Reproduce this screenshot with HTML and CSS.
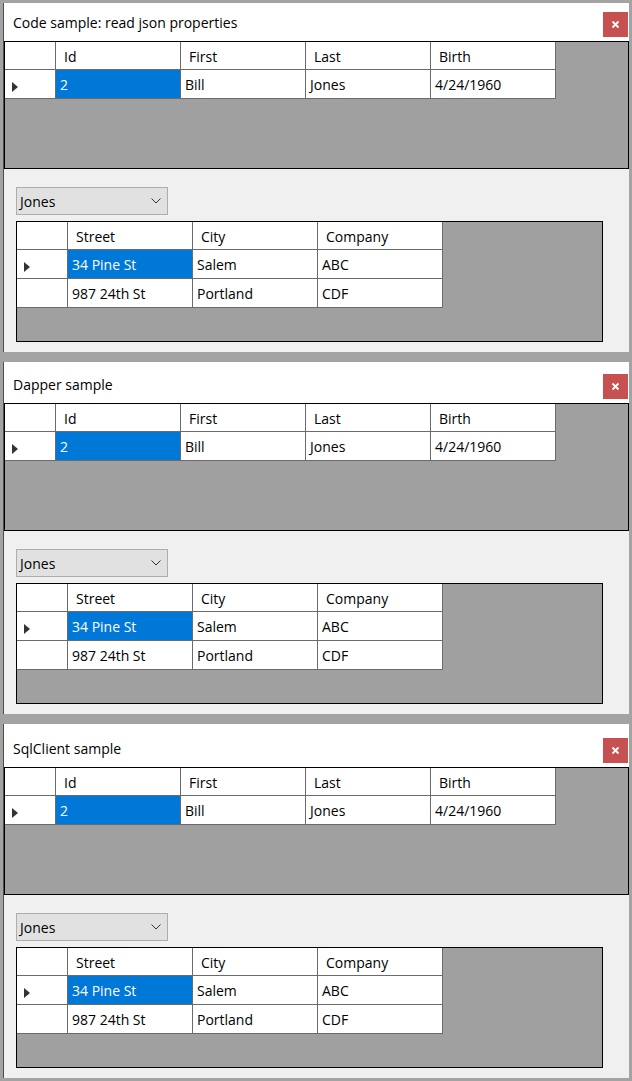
FILE: index.html
```html
<!DOCTYPE html>
<html lang="en">
<head>
<meta charset="utf-8">
<title>Samples</title>
<link rel="stylesheet" href="styles.css">
</head>
<body>
<div class="screen">

  <section class="win win-1">
    <header class="titlebar">
      <span class="title">Code sample: read json properties</span>
      <span class="close"><svg width="9" height="9" viewBox="0 0 9 9"><path d="M1.5 1.5L7.5 7.5M7.5 1.5L1.5 7.5" stroke="#fff" stroke-width="1.8"/></svg></span>
    </header>
    <div class="grid master">
      <div class="table cols-4">
        <div class="cell hdr rowhdr"></div>
        <div class="cell hdr">Id</div>
        <div class="cell hdr">First</div>
        <div class="cell hdr">Last</div>
        <div class="cell hdr">Birth</div>
        <div class="cell rowhdr"><span class="arrow"></span></div>
        <div class="cell sel">2</div>
        <div class="cell">Bill</div>
        <div class="cell">Jones</div>
        <div class="cell">4/24/1960</div>
      </div>
    </div>
    <div class="panel">
      <div class="combo"><span>Jones</span><svg class="chev" width="10" height="6" viewBox="0 0 10 6"><path d="M0.5 0.5L5 5L9.5 0.5" fill="none" stroke="#333" stroke-width="1"/></svg></div>
      <div class="grid detail">
        <div class="table cols-3">
          <div class="cell hdr rowhdr"></div>
          <div class="cell hdr">Street</div>
          <div class="cell hdr">City</div>
          <div class="cell hdr">Company</div>
          <div class="cell rowhdr"><span class="arrow"></span></div>
          <div class="cell sel">34 Pine St</div>
          <div class="cell">Salem</div>
          <div class="cell">ABC</div>
          <div class="cell rowhdr"></div>
          <div class="cell">987 24th St</div>
          <div class="cell">Portland</div>
          <div class="cell">CDF</div>
        </div>
      </div>
    </div>
  </section>

  <section class="win win-2">
    <header class="titlebar">
      <span class="title">Dapper sample</span>
      <span class="close"><svg width="9" height="9" viewBox="0 0 9 9"><path d="M1.5 1.5L7.5 7.5M7.5 1.5L1.5 7.5" stroke="#fff" stroke-width="1.8"/></svg></span>
    </header>
    <div class="grid master">
      <div class="table cols-4">
        <div class="cell hdr rowhdr"></div>
        <div class="cell hdr">Id</div>
        <div class="cell hdr">First</div>
        <div class="cell hdr">Last</div>
        <div class="cell hdr">Birth</div>
        <div class="cell rowhdr"><span class="arrow"></span></div>
        <div class="cell sel">2</div>
        <div class="cell">Bill</div>
        <div class="cell">Jones</div>
        <div class="cell">4/24/1960</div>
      </div>
    </div>
    <div class="panel">
      <div class="combo"><span>Jones</span><svg class="chev" width="10" height="6" viewBox="0 0 10 6"><path d="M0.5 0.5L5 5L9.5 0.5" fill="none" stroke="#333" stroke-width="1"/></svg></div>
      <div class="grid detail">
        <div class="table cols-3">
          <div class="cell hdr rowhdr"></div>
          <div class="cell hdr">Street</div>
          <div class="cell hdr">City</div>
          <div class="cell hdr">Company</div>
          <div class="cell rowhdr"><span class="arrow"></span></div>
          <div class="cell sel">34 Pine St</div>
          <div class="cell">Salem</div>
          <div class="cell">ABC</div>
          <div class="cell rowhdr"></div>
          <div class="cell">987 24th St</div>
          <div class="cell">Portland</div>
          <div class="cell">CDF</div>
        </div>
      </div>
    </div>
  </section>

  <section class="win win-3">
    <header class="titlebar">
      <span class="title">SqlClient sample</span>
      <span class="close"><svg width="9" height="9" viewBox="0 0 9 9"><path d="M1.5 1.5L7.5 7.5M7.5 1.5L1.5 7.5" stroke="#fff" stroke-width="1.8"/></svg></span>
    </header>
    <div class="grid master">
      <div class="table cols-4">
        <div class="cell hdr rowhdr"></div>
        <div class="cell hdr">Id</div>
        <div class="cell hdr">First</div>
        <div class="cell hdr">Last</div>
        <div class="cell hdr">Birth</div>
        <div class="cell rowhdr"><span class="arrow"></span></div>
        <div class="cell sel">2</div>
        <div class="cell">Bill</div>
        <div class="cell">Jones</div>
        <div class="cell">4/24/1960</div>
      </div>
    </div>
    <div class="panel">
      <div class="combo"><span>Jones</span><svg class="chev" width="10" height="6" viewBox="0 0 10 6"><path d="M0.5 0.5L5 5L9.5 0.5" fill="none" stroke="#333" stroke-width="1"/></svg></div>
      <div class="grid detail">
        <div class="table cols-3">
          <div class="cell hdr rowhdr"></div>
          <div class="cell hdr">Street</div>
          <div class="cell hdr">City</div>
          <div class="cell hdr">Company</div>
          <div class="cell rowhdr"><span class="arrow"></span></div>
          <div class="cell sel">34 Pine St</div>
          <div class="cell">Salem</div>
          <div class="cell">ABC</div>
          <div class="cell rowhdr"></div>
          <div class="cell">987 24th St</div>
          <div class="cell">Portland</div>
          <div class="cell">CDF</div>
        </div>
      </div>
    </div>
  </section>

</div>
</body>
</html>
```

FILE: styles.css
```css
* { box-sizing: border-box; }

html, body {
  margin: 0;
  padding: 0;
}

body {
  background: #a3a3a3;
  font-family: "Open Sans", "Noto Sans", "Liberation Sans", sans-serif;
  font-size: 14px;
  color: #000;
  width: 632px;
  height: 1081px;
  overflow: hidden;
}

.screen {
  display: flex;
  flex-direction: column;
}

.win {
  margin-left: 3px;
  width: 626px;
  border-left: 1px solid #4d4d4d;
  background: #f0f0f0;
  display: flex;
  flex-direction: column;
}

.win-1 { margin-top: 3px; }
.win-2 { margin-top: 10px; }
.win-3 { margin-top: 10px; }

.titlebar {
  background: #fff;
  display: flex;
  justify-content: space-between;
  align-items: flex-end;
  padding-left: 9px;
  padding-right: 1px;
}

.win-1 .titlebar { height: 38px; }
.win-2 .titlebar { height: 41px; }
.win-3 .titlebar { height: 43px; }

.title {
  line-height: 20px;
  margin-bottom: 8px;
  white-space: nowrap;
}

.close {
  width: 25px;
  height: 25px;
  margin-bottom: 4px;
  background: #c75050;
  display: flex;
  align-items: center;
  justify-content: center;
}

.close svg { display: block; }

.grid {
  background: #a0a0a0;
  border: 1px solid #000;
}

.master {
  width: 625px;
  height: 128px;
}

.panel {
  height: 183px;
  padding: 18px 0 10px 12px;
  display: flex;
  flex-direction: column;
  gap: 6px;
}

.combo {
  width: 152px;
  height: 28px;
  background: #e1e1e1;
  border: 1px solid #adadad;
  display: flex;
  align-items: center;
  justify-content: space-between;
  padding: 0 6px 0 3px;
  white-space: nowrap;
}

.chev { display: block; }

.detail {
  width: 587px;
  height: 121px;
}

.table {
  display: grid;
  grid-auto-rows: 29px;
  grid-template-rows: 28px;
}

.cols-4 { grid-template-columns: 51px repeat(4, 125px); }
.cols-3 { grid-template-columns: 51px repeat(3, 125px); }

.cell {
  background: #fff;
  border-right: 1px solid #6b6b6b;
  border-bottom: 1px solid #6b6b6b;
  display: flex;
  align-items: center;
  padding-left: 4px;
  padding-top: 1px;
  white-space: nowrap;
  overflow: hidden;
}

.cell.hdr { padding-left: 8px; }

.cell.sel {
  background: #0078d7;
  color: #fff;
}

.cell.rowhdr { padding-left: 7px; }

.arrow {
  width: 0;
  height: 0;
  border-top: 5px solid transparent;
  border-bottom: 5px solid transparent;
  border-left: 6px solid #333;
  margin-top: 4px;
}
```
